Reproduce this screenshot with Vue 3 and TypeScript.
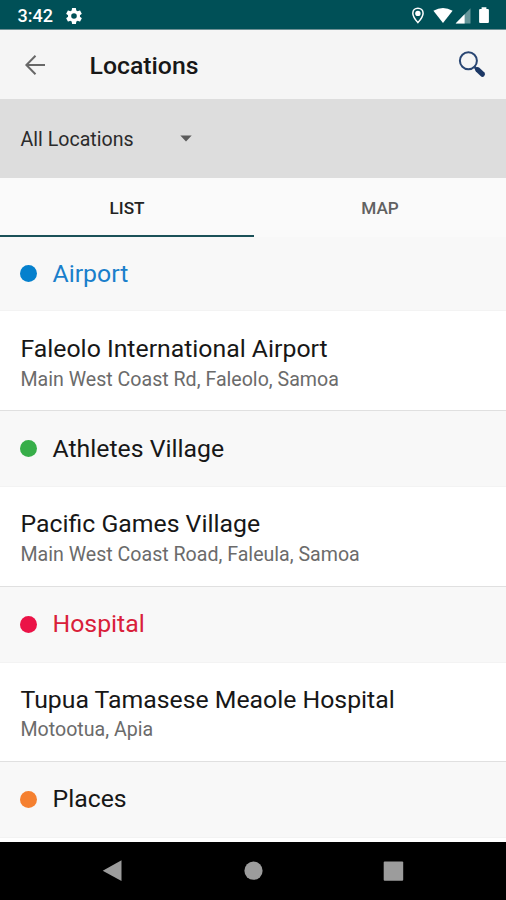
<script setup lang="ts">
interface Place {
  name: string
  address: string
}
interface Section {
  title: string
  tone: string
  places: Place[]
}

const sections: Section[] = [
  {
    title: 'Airport',
    tone: 'blue',
    places: [{ name: 'Faleolo International Airport', address: 'Main West Coast Rd, Faleolo, Samoa' }],
  },
  {
    title: 'Athletes Village',
    tone: 'green',
    places: [{ name: 'Pacific Games Village', address: 'Main West Coast Road, Faleula, Samoa' }],
  },
  {
    title: 'Hospital',
    tone: 'red',
    places: [{ name: 'Tupua Tamasese Meaole Hospital', address: 'Motootua, Apia' }],
  },
  { title: 'Places', tone: 'orange', places: [] },
]
</script>

<template>
  <div class="screen">
    <div class="status">
      <span class="clock">3:42</span>
      <svg class="gear" width="16" height="16" viewBox="2 2 20 20">
        <path fill="#fff" fill-rule="evenodd" d="M19.4 13a7.500 7.500 0 0 0 0-2l2.100-1.650a.5.5 0 0 0 .1-.63l-2-3.460a.5.5 0 0 0-.6-.22l-2.500 1a7.300 7.300 0 0 0-1.700-.98l-.37-2.650A.49.49 0 0 0 14 2h-4a.49.49 0 0 0-.5.42l-.37 2.650c-.6.25-1.170.58-1.700.98l-2.480-1a.5.5 0 0 0-.6.22l-2 3.460a.5.5 0 0 0 .12.63L4.600 11a7.500 7.500 0 0 0 0 2l-2.120 1.650a.5.5 0 0 0-.12.63l2 3.460c.12.22.38.3.6.22l2.500-1c.52.4 1.080.73 1.690.98l.38 2.650c.03.24.24.41.47.41h4c.25 0 .46-.17.49-.42l.37-2.640c.61-.25 1.170-.59 1.700-.98l2.480 1c.22.08.48 0 .6-.22l2-3.460a.5.5 0 0 0-.12-.64zM12 15.500a3.500 3.500 0 1 1 0-7 3.500 3.500 0 0 1 0 7z" />
      </svg>
      <svg class="indicators" width="80" height="20" viewBox="0 0 80 20">
        <path d="M7.900 2.200c-2.900 0-5.100 2.200-5.100 5 0 3.700 5.100 9.400 5.100 9.400s5.200-5.700 5.200-9.400c0-2.800-2.300-5-5.200-5z" fill="none" stroke="#fff" stroke-width="1.500" />
        <circle cx="7.900" cy="7.400" r="2.700" fill="#fff" />
        <path d="M23.400 4.700Q33 -.7 42.600 4.700L33 17z" fill="#fff" />
        <path d="M60.500 2.300V17.500H45.600z" fill="#fff" fill-opacity=".4" />
        <path d="M54.600 8.300V17.500H45.600z" fill="#fff" />
        <path d="M71.600 1.300h4.800v1.800h1.500q1 0 1 1v12q0 1-1 1h-7.800q-1 0-1-1V4.100q0-1 1-1h1.500z" fill="#fff" />
      </svg>
    </div>
    <header class="toolbar">
      <svg class="back" width="22" height="22" viewBox="0 0 22 22">
        <path d="M21 11H2.500M11.500 1.800L2.400 11l9.100 9.200" fill="none" stroke="#686868" stroke-width="2" />
      </svg>
      <h1>Locations</h1>
      <svg class="search" width="30" height="30" viewBox="0 0 30 30">
        <circle cx="10.400" cy="10.800" r="8.500" fill="none" stroke="#294673" stroke-width="2" />
        <path d="M16.500 16.800l3 3" stroke="#294673" stroke-width="2.600" />
        <path d="M19.600 19.700l4.800 4.500" stroke="#1c3765" stroke-width="5.200" stroke-linecap="round" />
      </svg>
    </header>
    <div class="filter">
      <span>All Locations</span>
      <svg width="12" height="7" viewBox="0 0 12 7"><path d="M.3.500h11.400L6 6.500z" fill="#5b5b5b" /></svg>
    </div>
    <nav class="tabs">
      <div class="tab active">LIST</div>
      <div class="tab">MAP</div>
    </nav>
    <main class="list">
      <section v-for="s in sections" :key="s.title" :class="s.tone">
        <h2><i class="dot"></i><span>{{ s.title }}</span></h2>
        <article v-for="p in s.places" :key="p.name">
          <div class="name">{{ p.name }}</div>
          <div class="address">{{ p.address }}</div>
        </article>
      </section>
    </main>
    <footer class="navbar">
      <svg width="506" height="58" viewBox="0 0 506 58" fill="#9c9c9c">
        <path d="M121.500 18.300v20.800L102.700 28.800z" />
        <circle cx="253.500" cy="28.700" r="9.100" />
        <rect x="383.700" y="19.500" width="19.500" height="19.300" rx="1" />
      </svg>
    </footer>
  </div>
</template>

<style>
body {
  margin: 0;
  background: #fff;
}
</style>

<style scoped>
.screen {
  width: 506px;
  height: 900px;
  display: flex;
  flex-direction: column;
  overflow: hidden;
  background: #fff;
  font-family: Roboto, sans-serif;
  color: #171717;
}
.status {
  height: 30px;
  box-sizing: border-box;
  border-bottom: 1px solid #6f9094;
  flex: none;
  display: flex;
  align-items: center;
  padding: 2px 16px 0 17.500px;
  background: #005057;
}
.clock {
  width: 48px;
  font-size: 18px;
  font-weight: 500;
  line-height: 20px;
  color: #fff;
}
.gear {
  margin-left: .5px;
}
.indicators {
  margin-left: auto;
}
.toolbar {
  height: 69px;
  flex: none;
  display: flex;
  align-items: center;
  padding: 0 18px 0 24px;
  background: #f5f5f5;
}
.toolbar h1 {
  margin: 2px 0 0 43.500px;
  font-size: 24.800px;
  font-weight: 500;
  line-height: 30px;
}
.search {
  margin-left: auto;
}
.filter {
  height: 79px;
  flex: none;
  display: flex;
  align-items: center;
  padding-left: 20.500px;
  background: #ddd;
}
.filter span {
  width: 159px;
  padding-top: 2px;
  font-size: 19.600px;
  line-height: 24px;
  color: #2b2b2b;
}
.tabs {
  height: 58.500px;
  flex: none;
  display: grid;
  grid-template-columns: 254px 252px;
  background: #fafafa;
}
.tab {
  box-sizing: border-box;
  height: 58.500px;
  border-bottom: 2px solid transparent;
  text-align: center;
  font-size: 17.200px;
  font-weight: 500;
  line-height: 60px;
  color: #616161;
}
.tab.active {
  color: #222;
  border-color: #1b5158;
}
.list {
  height: 605.500px;
  flex: none;
  overflow: hidden;
}
h2 {
  box-sizing: border-box;
  height: 76px;
  margin: 0;
  padding: 0 0 0 20px;
  display: flex;
  align-items: center;
  gap: 15.500px;
  background: #f8f8f8;
  border-bottom: 1px solid #f3f3f3;
  font-size: 24.800px;
  font-weight: 400;
  line-height: 30px;
}
.blue h2 {
  height: 74.500px;
  color: #1a7fcb;
}
.blue h2 span {
  padding-top: 1px;
}
.red h2 {
  height: 75.500px;
  color: #d9203a;
}
.orange h2 span {
  padding-bottom: 1px;
}
.dot {
  width: 17px;
  height: 17px;
  border-radius: 50%;
}
.blue .dot {
  background: #0580cd;
}
.green .dot {
  background: #37ae49;
}
.red .dot {
  background: #eb1347;
}
.orange .dot {
  background: #f58030;
}
article {
  box-sizing: border-box;
  height: 100px;
  padding: 22px 20px 0 20.500px;
  border-bottom: 1px solid #e0e0e0;
}
.green article {
  padding-top: 21px;
}
.red article {
  height: 99.500px;
  padding-top: 21px;
}
.name {
  font-size: 24.800px;
  line-height: 31px;
}
.address {
  font-size: 19.600px;
  line-height: 31px;
  color: #6b6b6b;
}
.red .address {
  line-height: 29px;
}
.navbar {
  height: 58px;
  flex: none;
  background: #000;
}
.navbar svg {
  display: block;
}
</style>
